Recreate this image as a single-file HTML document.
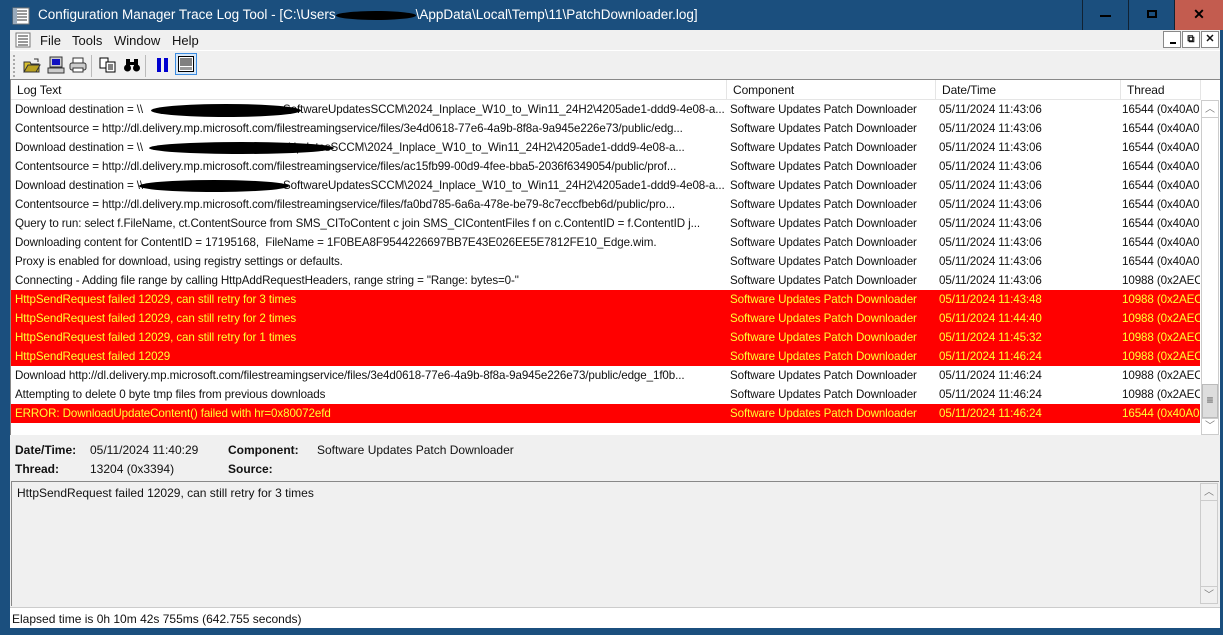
<!DOCTYPE html>
<html><head><meta charset="utf-8"><style>
*{margin:0;padding:0;box-sizing:border-box}
body{width:1223px;height:635px;overflow:hidden;background:#1b4f7e;font-family:"Liberation Sans",Tahoma,sans-serif;font-size:12px;color:#111;position:relative}
.abs{position:absolute}
#title{left:0;top:0;width:1223px;height:30px;background:#1b4f7e;color:#fff;font-size:14px}
#win{left:10px;top:30px;width:1210px;height:598px;background:#f0f0f0}
.row{position:absolute;left:0;height:19px;width:1189px;white-space:nowrap;line-height:19px;font-size:11.6px;letter-spacing:-0.1px}
.row span{position:absolute;top:0;overflow:hidden;white-space:nowrap}
.c1{left:4px;width:711px}.c2{left:719px;width:205px}.c3{left:928px;width:180px}.c4{left:1111px;width:78px}
.red{background:#ff0000;color:#ffff33}
.blob{position:absolute;background:#000;border-radius:50%}
.hdr span{position:absolute;top:0;height:20px;line-height:20px;border-right:1px solid #e5e5e5;padding-left:6px}
</style></head><body>
<div id="title" class="abs">
 <svg class="abs" style="left:12px;top:7px" width="18" height="18"><rect x="1" y="1" width="16" height="16" fill="#fff" stroke="#777"/><path d="M3 4h12M3 7h12M3 10h12M3 13h12" stroke="#333"/><rect x="1" y="1" width="4" height="16" fill="#9ab"/></svg>
 <div class="abs" style="left:38px;top:7px;white-space:nowrap;font-size:13.5px">Configuration Manager Trace Log Tool - [C:\Users<span style="display:inline-block;width:80px;height:9px;background:#000;border-radius:50%;vertical-align:middle"></span>\AppData\Local\Temp\11\PatchDownloader.log]</div>
 <div class="abs" style="left:1082px;top:0;width:46px;height:30px;border-left:1px solid #123"></div>
 <div class="abs" style="left:1100px;top:15px;width:11px;height:2px;background:#000"></div>
 <div class="abs" style="left:1128px;top:0;width:47px;height:30px;border-left:1px solid #123;border-right:1px solid #123"></div>
 <div class="abs" style="left:1147px;top:10px;width:10px;height:8px;border:2px solid #000"></div>
 <div class="abs" style="left:1175px;top:0;width:48px;height:30px;background:#c35c4f;color:#000;text-align:center;line-height:28px;font-size:14px;font-weight:bold">✕</div>
</div>
<div id="win" class="abs">
 <svg class="abs" style="left:5px;top:2px" width="16" height="16"><rect x="1" y="1" width="14" height="14" fill="#fff" stroke="#777"/><path d="M3 4h10M3 7h10M3 10h10M3 13h10" stroke="#333"/></svg>
 <div class="abs" style="left:30px;top:3px;font-size:13px">File</div>
 <div class="abs" style="left:62px;top:3px;font-size:13px">Tools</div>
 <div class="abs" style="left:104px;top:3px;font-size:13px">Window</div>
 <div class="abs" style="left:162px;top:3px;font-size:13px">Help</div>
 <div class="abs" style="left:1153px;top:1px;width:18px;height:17px;border:1px solid #888;background:#fff"><div class="abs" style="left:6px;top:10px;width:6px;height:2px;background:#000"></div></div>
 <div class="abs" style="left:1172px;top:1px;width:18px;height:17px;border:1px solid #888;background:#fff;font-size:10px;text-align:center;line-height:15px;font-weight:bold">⧉</div>
 <div class="abs" style="left:1191px;top:1px;width:18px;height:17px;border:1px solid #888;background:#fff;font-size:11px;text-align:center;line-height:15px;font-weight:bold">✕</div>
 <div class="abs" style="left:0;top:20px;width:1210px;height:1px;background:#fff"></div>
 <div class="abs" style="left:3px;top:25px;width:2px;height:22px;border-left:2px dotted #aaa"></div>
 <svg class="abs" style="left:13px;top:27px" width="18" height="16"><path d="M1 5h6l1 2h8v8H1z" fill="#d8c030" stroke="#333"/><path d="M1 15l4-7h12l-4 7z" fill="#b8a020" stroke="#333"/><path d="M11 2l4 0 0 3" stroke="#333" fill="none"/></svg>
 <svg class="abs" style="left:37px;top:26px" width="18" height="18"><rect x="3" y="1" width="12" height="10" fill="#ccc" stroke="#333"/><rect x="5" y="3" width="8" height="6" fill="#1010c0"/><rect x="1" y="12" width="16" height="5" fill="#ccc" stroke="#333"/></svg>
 <svg class="abs" style="left:59px;top:27px" width="18" height="16"><rect x="4" y="1" width="10" height="5" fill="#fff" stroke="#333"/><rect x="1" y="6" width="16" height="7" rx="2" fill="#ccc" stroke="#333"/><rect x="4" y="11" width="10" height="4" fill="#fff" stroke="#333"/></svg>
 <div class="abs" style="left:81px;top:25px;width:1px;height:22px;background:#bbb"></div>
 <svg class="abs" style="left:89px;top:27px" width="18" height="16"><rect x="1" y="1" width="8" height="10" fill="#fff" stroke="#000"/><rect x="7" y="5" width="9" height="10" fill="#fff" stroke="#000"/><path d="M9 8h5M9 10h5M9 12h5" stroke="#000"/></svg>
 <svg class="abs" style="left:113px;top:27px" width="18" height="16"><circle cx="4.5" cy="11" r="3.5" fill="#000"/><circle cx="13.5" cy="11" r="3.5" fill="#000"/><rect x="3" y="2" width="4" height="8" fill="#000"/><rect x="11" y="2" width="4" height="8" fill="#000"/><rect x="7" y="5" width="4" height="3" fill="#000"/></svg>
 <div class="abs" style="left:135px;top:25px;width:1px;height:22px;background:#bbb"></div>
 <div class="abs" style="left:147px;top:28px;width:4px;height:14px;background:#0000d0"></div>
 <div class="abs" style="left:154px;top:28px;width:4px;height:14px;background:#0000d0"></div>
 <div class="abs" style="left:165px;top:23px;width:22px;height:22px;border:1px solid #3c8ce0;background:#d8e8f8"></div>
 <svg class="abs" style="left:168px;top:26px" width="16" height="16"><rect x="0.5" y="0.5" width="15" height="15" fill="#fff" stroke="#000"/><path d="M2 3h12M2 5h12M2 7h12M2 9h12" stroke="#000"/><rect x="2" y="11" width="12" height="3" fill="#999"/></svg>
 <div class="abs" style="left:0;top:49px;width:1210px;height:356px;background:#fff;border-top:1px solid #888;border-left:1px solid #888;overflow:hidden">
  <div class="row hdr" style="top:0;height:20px;border-bottom:1px solid #e5e5e5;font-size:12px">
   <span style="left:0;width:716px">Log Text</span><span style="left:716px;width:209px">Component</span><span style="left:925px;width:185px">Date/Time</span><span style="left:1110px;width:80px">Thread</span>
  </div>
  <div style="position:absolute;left:0;top:20px">
   <div class="row" style="top:0"><span class="c1">Download destination = \\<i style="display:inline-block;width:140px"></i>SoftwareUpdatesSCCM\2024_Inplace_W10_to_Win11_24H2\4205ade1-ddd9-4e08-a...</span><span class="c2">Software Updates Patch Downloader</span><span class="c3">05/11/2024 11:43:06</span><span class="c4">16544 (0x40A0</span></div>
   <div class="blob" style="left:140px;top:4px;width:150px;height:13px"></div>
   <div class="row" style="top:19px"><span class="c1">Contentsource = http://dl.delivery.mp.microsoft.com/filestreamingservice/files/3e4d0618-77e6-4a9b-8f8a-9a945e226e73/public/edg...</span><span class="c2">Software Updates Patch Downloader</span><span class="c3">05/11/2024 11:43:06</span><span class="c4">16544 (0x40A0</span></div>
   <div class="row" style="top:38px"><span class="c1">Download destination = \\<i style="display:inline-block;width:145px"></i>UpdatesSCCM\2024_Inplace_W10_to_Win11_24H2\4205ade1-ddd9-4e08-a...</span><span class="c2">Software Updates Patch Downloader</span><span class="c3">05/11/2024 11:43:06</span><span class="c4">16544 (0x40A0</span></div>
   <div class="blob" style="left:138px;top:42px;width:185px;height:12px"></div>
   <div class="row" style="top:57px"><span class="c1">Contentsource = http://dl.delivery.mp.microsoft.com/filestreamingservice/files/ac15fb99-00d9-4fee-bba5-2036f6349054/public/prof...</span><span class="c2">Software Updates Patch Downloader</span><span class="c3">05/11/2024 11:43:06</span><span class="c4">16544 (0x40A0</span></div>
   <div class="row" style="top:76px"><span class="c1">Download destination = \\<i style="display:inline-block;width:140px"></i>SoftwareUpdatesSCCM\2024_Inplace_W10_to_Win11_24H2\4205ade1-ddd9-4e08-a...</span><span class="c2">Software Updates Patch Downloader</span><span class="c3">05/11/2024 11:43:06</span><span class="c4">16544 (0x40A0</span></div>
   <div class="blob" style="left:128px;top:80px;width:150px;height:12px"></div>
   <div class="row" style="top:95px"><span class="c1">Contentsource = http://dl.delivery.mp.microsoft.com/filestreamingservice/files/fa0bd785-6a6a-478e-be79-8c7eccfbeb6d/public/pro...</span><span class="c2">Software Updates Patch Downloader</span><span class="c3">05/11/2024 11:43:06</span><span class="c4">16544 (0x40A0</span></div>
   <div class="row" style="top:114px"><span class="c1">Query to run: select f.FileName, ct.ContentSource from SMS_CIToContent c join SMS_CIContentFiles f on c.ContentID = f.ContentID j...</span><span class="c2">Software Updates Patch Downloader</span><span class="c3">05/11/2024 11:43:06</span><span class="c4">16544 (0x40A0</span></div>
   <div class="row" style="top:133px"><span class="c1">Downloading content for ContentID = 17195168,&nbsp; FileName = 1F0BEA8F9544226697BB7E43E026EE5E7812FE10_Edge.wim.</span><span class="c2">Software Updates Patch Downloader</span><span class="c3">05/11/2024 11:43:06</span><span class="c4">16544 (0x40A0</span></div>
   <div class="row" style="top:152px"><span class="c1">Proxy is enabled for download, using registry settings or defaults.</span><span class="c2">Software Updates Patch Downloader</span><span class="c3">05/11/2024 11:43:06</span><span class="c4">16544 (0x40A0</span></div>
   <div class="row" style="top:171px"><span class="c1">Connecting - Adding file range by calling HttpAddRequestHeaders, range string = "Range: bytes=0-"</span><span class="c2">Software Updates Patch Downloader</span><span class="c3">05/11/2024 11:43:06</span><span class="c4">10988 (0x2AEC</span></div>
   <div class="row red" style="top:190px"><span class="c1">HttpSendRequest failed 12029, can still retry for 3 times</span><span class="c2">Software Updates Patch Downloader</span><span class="c3">05/11/2024 11:43:48</span><span class="c4">10988 (0x2AEC</span></div>
   <div class="row red" style="top:209px"><span class="c1">HttpSendRequest failed 12029, can still retry for 2 times</span><span class="c2">Software Updates Patch Downloader</span><span class="c3">05/11/2024 11:44:40</span><span class="c4">10988 (0x2AEC</span></div>
   <div class="row red" style="top:228px"><span class="c1">HttpSendRequest failed 12029, can still retry for 1 times</span><span class="c2">Software Updates Patch Downloader</span><span class="c3">05/11/2024 11:45:32</span><span class="c4">10988 (0x2AEC</span></div>
   <div class="row red" style="top:247px"><span class="c1">HttpSendRequest failed 12029</span><span class="c2">Software Updates Patch Downloader</span><span class="c3">05/11/2024 11:46:24</span><span class="c4">10988 (0x2AEC</span></div>
   <div class="row" style="top:266px"><span class="c1">Download http://dl.delivery.mp.microsoft.com/filestreamingservice/files/3e4d0618-77e6-4a9b-8f8a-9a945e226e73/public/edge_1f0b...</span><span class="c2">Software Updates Patch Downloader</span><span class="c3">05/11/2024 11:46:24</span><span class="c4">10988 (0x2AEC</span></div>
   <div class="row" style="top:285px"><span class="c1">Attempting to delete 0 byte tmp files from previous downloads</span><span class="c2">Software Updates Patch Downloader</span><span class="c3">05/11/2024 11:46:24</span><span class="c4">10988 (0x2AEC</span></div>
   <div class="row red" style="top:304px"><span class="c1">ERROR: DownloadUpdateContent() failed with hr=0x80072efd</span><span class="c2">Software Updates Patch Downloader</span><span class="c3">05/11/2024 11:46:24</span><span class="c4">16544 (0x40A0</span></div>
  </div>
  <div class="abs" style="left:1190px;top:20px;width:18px;height:335px;background:#fff;border:1px solid #ccc">
   <div class="abs" style="left:0;top:0;width:16px;height:17px;border-bottom:1px solid #ccc;text-align:center;color:#777;font-size:10px;line-height:17px">︿</div>
   <div class="abs" style="left:0;top:283px;width:16px;height:34px;background:#ddd;border:1px solid #bbb;text-align:center;line-height:30px;color:#555">≡</div>
   <div class="abs" style="left:0;top:317px;width:16px;height:16px;border-top:1px solid #ccc;text-align:center;color:#777;font-size:10px;line-height:16px">﹀</div>
  </div>
 </div>
 <div class="abs" style="left:5px;top:413px;font-weight:bold">Date/Time:</div>
 <div class="abs" style="left:80px;top:413px">05/11/2024 11:40:29</div>
 <div class="abs" style="left:218px;top:413px;font-weight:bold">Component:</div>
 <div class="abs" style="left:307px;top:413px">Software Updates Patch Downloader</div>
 <div class="abs" style="left:5px;top:432px;font-weight:bold">Thread:</div>
 <div class="abs" style="left:80px;top:432px">13204 (0x3394)</div>
 <div class="abs" style="left:218px;top:432px;font-weight:bold">Source:</div>
 <div class="abs" style="left:1px;top:451px;width:1208px;height:125px;border-top:1px solid #888;border-left:1px solid #888;background:#f0f0f0">
  <div class="abs" style="left:5px;top:4px">HttpSendRequest failed 12029, can still retry for 3 times</div>
  <div class="abs" style="left:1188px;top:1px;width:18px;height:121px;border:1px solid #ccc;background:#f0f0f0">
   <div class="abs" style="left:0;top:0;width:16px;height:17px;border-bottom:1px solid #ccc;text-align:center;color:#777;font-size:10px;line-height:17px">︿</div>
   <div class="abs" style="left:0;top:102px;width:16px;height:17px;border-top:1px solid #ccc;text-align:center;color:#777;font-size:10px;line-height:17px">﹀</div>
  </div>
 </div>
 <div class="abs" style="left:0;top:577px;width:1210px;height:21px;background:#fff;border-top:1px solid #ccc">
  <div class="abs" style="left:2px;top:4px">Elapsed time is 0h 10m 42s 755ms (642.755 seconds)</div>
 </div>
</div>
</body></html>
